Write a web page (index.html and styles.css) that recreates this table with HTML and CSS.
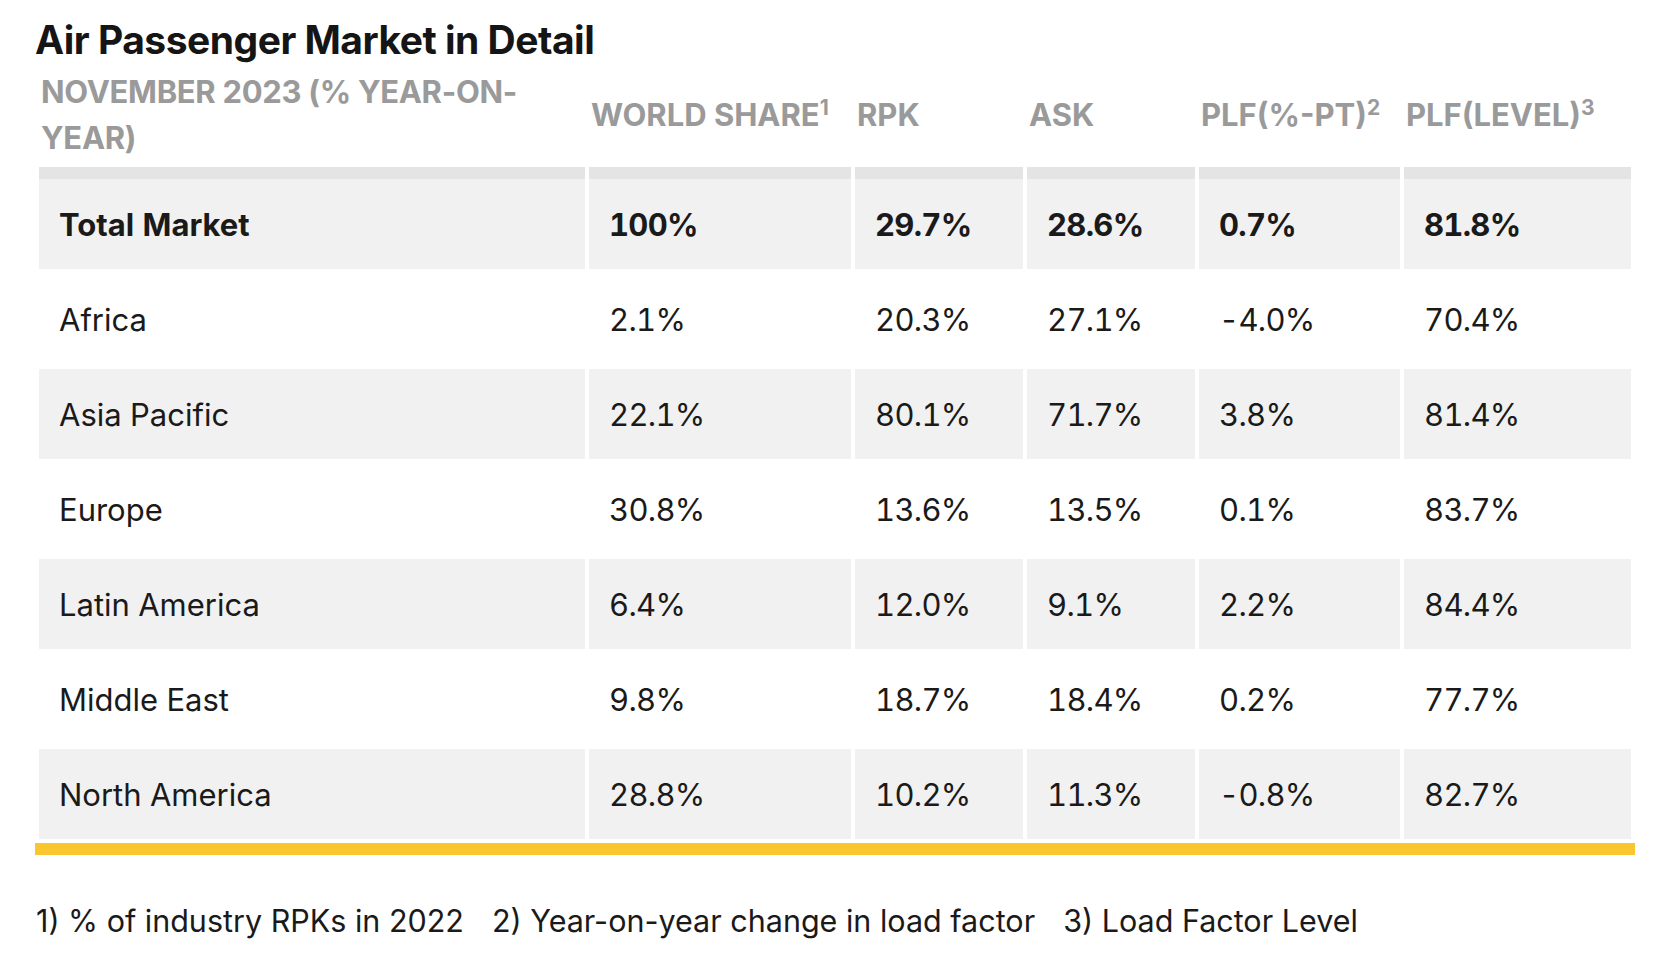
FILE: index.html
```html
<!DOCTYPE html>
<html lang="en">
<head>
<meta charset="utf-8">
<title>Air Passenger Market in Detail</title>
<link rel="stylesheet" href="styles.css">
</head>
<body>
<main class="page">
  <h1 class="title">Air Passenger Market in Detail</h1>
  <div class="table-wrap">
    <table class="market">
      <colgroup>
        <col class="c1"><col class="c2"><col class="c3"><col class="c4"><col class="c5"><col class="c6">
      </colgroup>
      <thead>
        <tr>
          <th class="first">NOVEMBER 2023 (% YEAR-ON-YEAR)</th>
          <th>WORLD SHARE<sup>1</sup></th>
          <th>RPK</th>
          <th>ASK</th>
          <th>PLF(%-PT)<sup>2</sup></th>
          <th>PLF(LEVEL)<sup>3</sup></th>
        </tr>
      </thead>
      <tbody>
        <tr class="total shade"><td>Total Market</td><td>100%</td><td>29.7%</td><td>28.6%</td><td>0.7%</td><td>81.8%</td></tr>
        <tr><td>Africa</td><td>2.1%</td><td>20.3%</td><td>27.1%</td><td>-4.0%</td><td>70.4%</td></tr>
        <tr class="shade"><td>Asia Pacific</td><td>22.1%</td><td>80.1%</td><td>71.7%</td><td>3.8%</td><td>81.4%</td></tr>
        <tr><td>Europe</td><td>30.8%</td><td>13.6%</td><td>13.5%</td><td>0.1%</td><td>83.7%</td></tr>
        <tr class="shade"><td>Latin America</td><td>6.4%</td><td>12.0%</td><td>9.1%</td><td>2.2%</td><td>84.4%</td></tr>
        <tr><td>Middle East</td><td>9.8%</td><td>18.7%</td><td>18.4%</td><td>0.2%</td><td>77.7%</td></tr>
        <tr class="shade"><td>North America</td><td>28.8%</td><td>10.2%</td><td>11.3%</td><td>-0.8%</td><td>82.7%</td></tr>
      </tbody>
    </table>
  </div>
  <p class="notes">
    <span>1) % of industry RPKs in 2022</span>
    <span>2) Year-on-year change in load factor</span>
    <span>3) Load Factor Level</span>
  </p>
</main>
</body>
</html>
```
FILE: styles.css
```css
* { box-sizing: border-box; }

html, body {
  margin: 0;
  padding: 0;
  background: #ffffff;
}

body {
  font-family: Inter, "Noto Sans", "Liberation Sans", sans-serif;
  color: #1a1a1a;
}

.page {
  width: 1600px;
  margin-left: 35px;
  padding-top: 16px;
}

.title {
  margin: 0;
  font-size: 39px;
  line-height: 47px;
  font-weight: 700;
  letter-spacing: -0.5px;
  color: #151515;
}

.table-wrap {
  border-bottom: 12px solid #f9c630;
}

.market {
  width: 1600px;
  table-layout: fixed;
  border-collapse: separate;
  border-spacing: 4px 5px;
  margin-bottom: -1px;
}

.c1 { width: 546px; }
.c2 { width: 262px; }
.c3 { width: 168px; }
.c4 { width: 168px; }
.c5 { width: 201px; }
.c6 { width: 227px; }

.market th {
  text-align: left;
  vertical-align: middle;
  font-size: 31px;
  line-height: 46px;
  font-weight: 700;
  color: #9a9a9a;
  padding: 1px 2px 1px 2px;
}

.market th.first {
  padding-right: 40px;
  letter-spacing: -0.3px;
}

.market sup {
  font-size: 21px;
  line-height: 0;
  vertical-align: 11px;
}

.market td {
  height: 90px;
  padding: 0 10px 0 20px;
  font-size: 31px;
  font-weight: 400;
  font-variant-numeric: tabular-nums;
  letter-spacing: -0.7px;
  vertical-align: middle;
  color: #1a1a1a;
  white-space: nowrap;
}

.market td:first-child {
  letter-spacing: 0;
}

.market tr.shade td {
  background: #f1f1f1;
}

.market tr.total td {
  font-weight: 700;
  border-top: 12px solid #e4e4e4;
  height: 102px;
}

.notes {
  display: flex;
  gap: 28px;
  margin: 44px 0 0 1px;
  font-size: 30.5px;
  line-height: 43px;
  color: #1a1a1a;
}
```
